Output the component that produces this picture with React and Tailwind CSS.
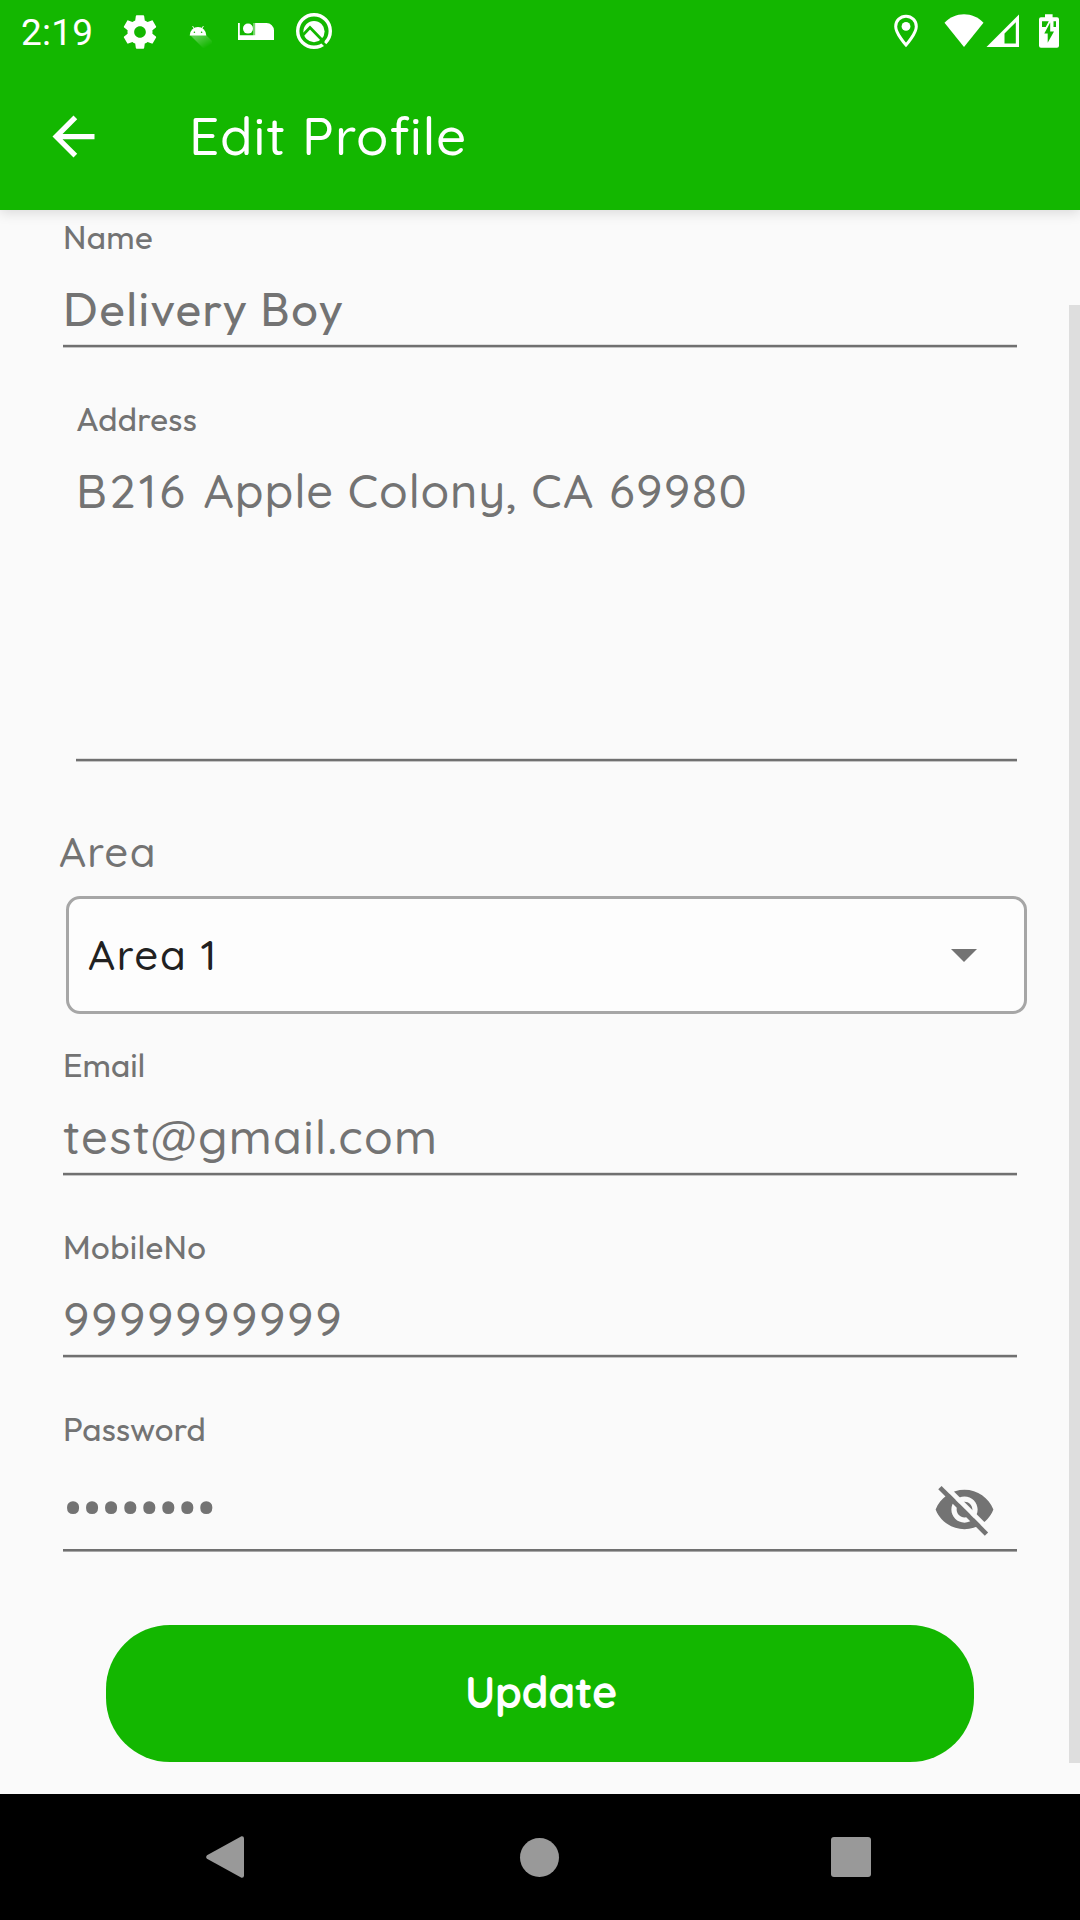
import React from "react";

function StatusBar() {
  return (
    <div className="flex h-[63px] shrink-0 items-start text-white">
      <div className="ml-[21px] mt-[12px] h-[42px] w-[78px] whitespace-nowrap font-[Roboto,sans-serif] text-[37px] font-normal leading-[42px] tracking-[0.2px]">2:19</div>
      <svg className="ml-[21px] mt-[11.5px] shrink-0" width="40" height="40" viewBox="0 0 24 24" fill="currentColor">
        <path d="M19.43 12.98c.04-.32.07-.64.07-.98s-.03-.66-.07-.98l2.11-1.65c.19-.15.24-.42.12-.64l-2-3.46c-.12-.22-.39-.3-.61-.22l-2.49 1c-.52-.4-1.08-.73-1.69-.98l-.38-2.65C14.46 2.18 14.25 2 14 2h-4c-.25 0-.46.18-.49.42l-.38 2.65c-.61.25-1.17.59-1.69.98l-2.49-1c-.23-.09-.49 0-.61.22l-2 3.46c-.13.22-.07.49.12.64l2.11 1.65c-.04.32-.07.65-.07.98s.03.66.07.98l-2.11 1.65c-.19.15-.24.42-.12.64l2 3.46c.12.22.39.3.61.22l2.49-1c.52.4 1.08.73 1.69.98l.38 2.65c.03.24.24.42.49.42h4c.25 0 .46-.18.49-.42l.38-2.65c.61-.25 1.17-.59 1.69-.98l2.49 1c.23.09.49 0 .61-.22l2-3.46c.12-.22.07-.49-.12-.64l-2.11-1.65zM12 15.5c-1.93 0-3.5-1.57-3.5-3.5s1.57-3.5 3.5-3.5 3.5 1.57 3.5 3.5-1.57 3.5-3.5 3.5z" />
      </svg>
      {/* small robot head with a long shadow */}
      <svg className="ml-[28px] mt-[24px] shrink-0" width="26" height="26" viewBox="0 0 26 26">
        <defs>
          <linearGradient id="robotShadow" x1="0" y1="0" x2="1" y2="1">
            <stop offset="0.2" stopColor="#fff" stopOpacity="0.32" />
            <stop offset="0.85" stopColor="#fff" stopOpacity="0" />
          </linearGradient>
        </defs>
        <path d="M2 11 L18 11 L24 17 L24 24 L15 24 Z" fill="url(#robotShadow)" />
        <path d="M1.7 11.4a8.3 8.3 0 0 1 16.6 0z" fill="#fff" />
        <path d="M4.6 2l1.6 3M15.4 2l-1.6 3" stroke="#fff" strokeWidth="0.9" />
        <circle cx="6.4" cy="8.2" r="0.8" fill="#13b700" />
        <circle cx="13.6" cy="8.2" r="0.8" fill="#13b700" />
      </svg>
      <svg className="ml-[23px] mt-[22px] shrink-0" width="38" height="20" viewBox="0 0 38 20" fill="currentColor">
        <path d="M1 1h1.800v12.200h13.600V1H29.500a7.500 7.500 0 0 1 7.500 7.500V18H1z" />
        <path d="M16.400 1h1.800v12.200h-1.800z" fill="#13b700" fillOpacity="0.55" />
        <circle cx="11" cy="6.600" r="5" />
      </svg>
      <svg className="ml-[20px] mt-[12px] shrink-0" width="38" height="38" viewBox="0 0 38 38">
        <circle cx="19" cy="19" r="16.3" fill="none" stroke="#fff" strokeWidth="3.4" />
        <path d="M25 28l8 8" stroke="#13b700" strokeWidth="3" />
        <circle cx="19" cy="19.600" r="10.600" fill="#fff" />
        <path d="M7 24l8-8.500 14 14.500" fill="none" stroke="#13b700" strokeWidth="2.800" />
      </svg>

      <div className="flex-1" />
      <svg className="mt-[14px] shrink-0" width="24" height="34" viewBox="0 0 24 34">
        <path d="M12 2.200A10.200 10.200 0 0 0 1.700 12.400C1.700 19.500 12 31 12 31s10.300-11.500 10.300-18.600A10.200 10.200 0 0 0 12 2.200z" fill="none" stroke="#fff" strokeWidth="3" />
        <circle cx="12" cy="12.400" r="4.400" fill="#fff" />
      </svg>
      <svg className="ml-[26px] mt-[14px] shrink-0" width="40" height="34" viewBox="0 0 40 34" fill="currentColor">
        <path d="M20 33L0.500 8.800C6 3.200 12.500 0.300 20 0.300S34 3.200 39.500 8.800z" />
      </svg>
      <svg className="ml-[2px] mt-[14px] shrink-0" width="34" height="34" viewBox="0 0 34 34" fill="currentColor">
        <path fillRule="evenodd" d="M0.500 33L33 0.500V33zM18.500 19.500V29.600H29.800V8.200z" />
      </svg>
      <svg className="ml-[18px] mr-[20px] mt-[14px] shrink-0" width="22" height="34" viewBox="0 0 22 34">
        <path d="M7 0.300h7.600v3H19a2 2 0 0 1 2 2V31.700a2 2 0 0 1-2 2H3a2 2 0 0 1-2-2V5.300a2 2 0 0 1 2-2h4z" fill="#fff" />
        <path d="M4 7.300h6.800L7.700 13H4zM15.500 7.300H18V13h-2.500z" fill="#13b700" />
        <path d="M12.200 8.500L6.300 19.400H9.700V28.700L16 17.400H12.200z" fill="#13b700" />
      </svg>
    </div>
  );
}

function Line() {
  return <div className="h-1 border-y border-t-[#dedede] border-b-[#c4c4c4] bg-[#707070]" />;
}

function Label({ children, className }) {
  return (
    <div className={"h-10 whitespace-nowrap font-[Outfit,Quicksand,Inter,sans-serif] text-[33px] font-normal leading-10 [font-variation-settings:'wght'_400] " + className}>
      {children}
    </div>
  );
}

function Value({ children, className }) {
  return <div className={"mt-[22px] h-[59px] whitespace-nowrap text-[47px] leading-[60px] " + className}>{children}</div>;
}

export default function App() {
  return (
    <div className="flex h-[1920px] w-[1080px] flex-col overflow-hidden bg-[#fafafa] font-[Quicksand,Inter,sans-serif] font-medium text-[#737373]">
      <header className="relative z-10 flex h-[210px] shrink-0 flex-col bg-[#13b700] text-white shadow-[0_3px_12px_rgba(0,0,0,0.13)]">
        <StatusBar />
        <div className="flex h-[147px] items-center">
          <svg className="ml-[42px] shrink-0" width="63" height="63" viewBox="0 0 24 24" fill="currentColor">
            <path d="M20 11H7.830l5.590-5.590L12 4l-8 8 8 8 1.410-1.410L7.830 13H20v-2z" />
          </svg>
          <h1 className="-mt-[3px] ml-[84px] h-[70px] whitespace-nowrap text-[53px] font-medium leading-[70px] tracking-[1.02px] [font-feature-settings:'liga'_1]">Edit Profile</h1>
        </div>
      </header>

      <div className="flex h-[1584px] shrink-0">
        <main className="flex w-[1069px] flex-col pl-[63px] pr-[52px] pt-[7px]">
          <section className="flex flex-col">
            <Label className="tracking-[0.35px]">Name</Label>
            <Value className="font-[Outfit,Quicksand,Inter,sans-serif] font-normal tracking-[1.72px] [font-variation-settings:'wght'_380]">Delivery Boy</Value>
            <div className="h-[6px]" />
            <Line />
          </section>

          <section className="ml-[13px] mt-[51px] flex flex-col">
            <Label className="tracking-[0.3px]">Address</Label>
            <Value className="tracking-[1.43px]">
              <span className="tracking-[2.9px]">B216 </span>
              <span className="tracking-[0.9px]">Apple Colony, </span>CA 69980
            </Value>
            <div className="h-[238px]" />
            <Line />
          </section>

          <section className="mt-[65px] flex flex-col">
            <div className="-ml-1 h-12 whitespace-nowrap text-[42px] leading-[50px] tracking-[1.2px]">Area</div>
            <div className="-mr-[10px] ml-[3px] mt-[21px] flex h-[118px] items-center justify-between rounded-[14px] border-3 border-[#a6a6a6] bg-[#fdfdfd] pl-[19px] pr-[47px]">
              <span className="h-12 whitespace-nowrap text-[42px] leading-[48px] tracking-[1.6px] text-[#212121]">Area 1</span>
              <svg width="26" height="13" viewBox="0 0 26 13" fill="#737373">
                <path d="M0 0h26L13 13z" />
              </svg>
            </div>
          </section>

          <section className="mt-[31px] flex flex-col">
            <Label className="tracking-[0.1px]">Email</Label>
            <Value className="tracking-[1.25px]">test@gmail.com</Value>
            <div className="h-[6px]" />
            <Line />
          </section>

          <section className="mt-[51px] flex flex-col">
            <Label className="tracking-[0.42px]">MobileNo</Label>
            <Value className="tracking-[1.6px]">9999999999</Value>
            <div className="h-[6px]" />
            <Line />
          </section>

          <section className="mt-[51px] flex flex-col">
            <Label className="tracking-[0.2px]">Password</Label>
            <div className="flex h-[100px] justify-between pr-[21px] pt-[29px]">
              <span className="mt-[2px] h-15 whitespace-nowrap font-[Roboto,sans-serif] text-[60px] font-normal leading-[60px] tracking-[-1.2px]">••••••••</span>
              <svg className="shrink-0" width="63" height="63" viewBox="0 0 24 24">
                <path fill="#737373" d="M12 4.500C7 4.500 2.730 7.610 1 12c1.730 4.390 6 7.500 11 7.500s9.270-3.110 11-7.500c-1.730-4.390-6-7.500-11-7.500zM12 17c-2.760 0-5-2.240-5-5s2.240-5 5-5 5 2.240 5 5-2.240 5-5 5zm0-8c-1.660 0-3 1.340-3 3s1.340 3 3 3 3-1.340 3-3-1.340-3-3-3z" />
                <path fill="#fafafa" d="M3.270 3L21 20.730L22.270 19.460L4.540 1.730z" />
                <path fill="#737373" d="M2 4.270L19.730 22L21 20.730L3.270 3z" />
              </svg>
            </div>
            <div className="h-[3px] border-b border-b-[#a8a8a8] bg-[#707070]" />
          </section>

          <button className="ml-[43px] mt-[73px] flex h-[137px] w-[868px] shrink-0 items-center justify-center rounded-[64px] bg-[#13b700] pb-[2px] pl-[2px] text-[43px] font-bold tracking-[-0.35px] text-white">
            Update
          </button>
        </main>
        <div className="mt-[95px] h-[1458px] w-[11px] bg-[#dedede]" />
      </div>

      <nav className="flex h-[126px] shrink-0 items-center bg-black pl-[206px]">
        <svg width="38" height="42" viewBox="0 0 38 42" fill="#999999">
          <path d="M35.500 0.300Q38 0 38 2.500V39.500Q38 42 35.500 41.700L1 22.800Q-0.700 21 1 19.200z" />
        </svg>
        <div className="ml-[276px] h-[39px] w-[39px] rounded-full bg-[#999999]" />
        <div className="ml-[272px] h-10 w-10 rounded-[3px] bg-[#999999]" />
      </nav>
    </div>
  );
}
